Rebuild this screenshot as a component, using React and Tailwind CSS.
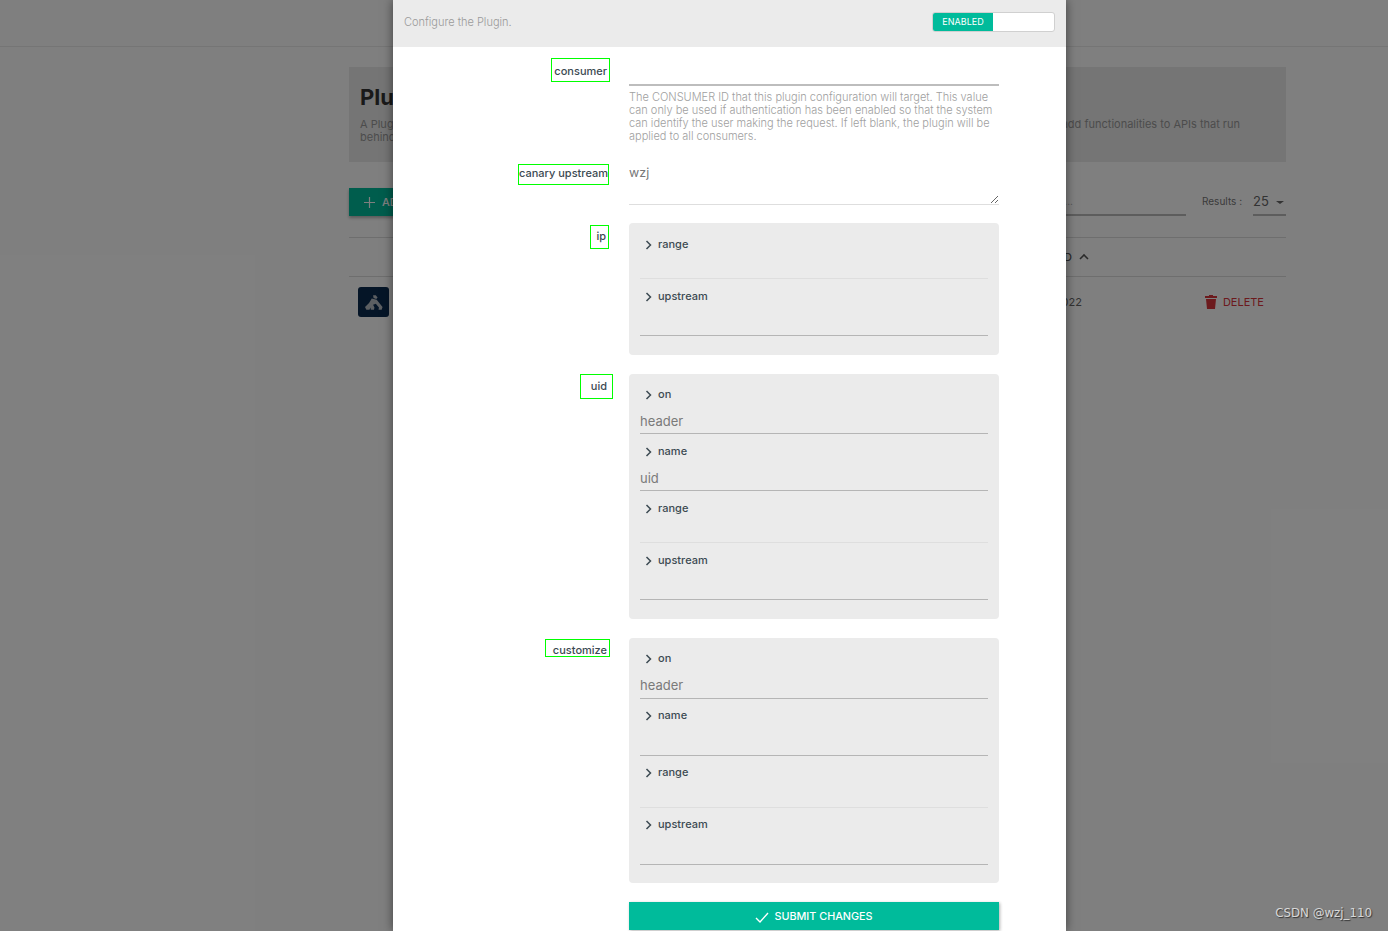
import React from "react";

function Title({ children }) {
  return (
    <div className="flex h-[21px] items-center pl-[5px] text-[11px] font-medium text-[#3c4a52]">
      <svg width="8" height="10" viewBox="0 0 8 10" className="mr-[5px]" fill="none" stroke="#3c4a52" strokeWidth="1.5">
        <path d="M1.5 1l4 4-4 4" />
      </svg>
      {children}
    </div>
  );
}

function InputField({ label, value = "", tall = false }) {
  return (
    <div className={tall ? "mb-[6px]" : "mb-[7px]"}>
      <Title>{label}</Title>
      <input
        readOnly
        value={value}
        className={
          (tall ? "h-[30px] pt-[2px] " : "h-[29px] pt-[3px] ") +
          "block w-full border-b border-[#b5b5b5] bg-transparent text-[13px] text-[#7a7a7a] outline-none"
        }
      />
    </div>
  );
}

function RangeField({ tall = false }) {
  return (
    <div className={tall ? "mb-[6px]" : "mb-[7px]"}>
      <Title>range</Title>
      <div className={(tall ? "h-[25px] " : "h-[24px] ") + "border-b border-[#dedede]"} />
    </div>
  );
}

function Panel({ children, className = "pt-[10px]" }) {
  return <div className={"rounded-[4px] bg-[#ebebeb] px-[11px] pb-[12px] " + className}>{children}</div>;
}

function Row({ label, children, className = "" }) {
  return (
    <div className={"flex " + className}>
      <div className="flex w-[216px] shrink-0 items-start justify-end">{label}</div>
      <div className="ml-[20px] w-[370px]">{children}</div>
    </div>
  );
}

function Label({ children, className = "" }) {
  return (
    <span className={"block border border-[#00ff00] text-right text-[11px] font-medium whitespace-nowrap text-[#3c4a52] " + className}>
      {children}
    </span>
  );
}

function KongLogo() {
  return (
    <svg width="18" height="17" viewBox="0 0 20 17" fill="#b9bec4">
      <path d="M9 0.5l3 0 2 2.5-1.5 1.5-3-1z" />
      <path d="M7.5 4l5.5 1.5 6.5 8-1 3h-3.5l.5-2.5-3.5-4-3 1 1.5 3-.5 2.500H6.500l-.5-2.500-1 2.500H1.500l-1.500-3 4.500-4.500z" />
    </svg>
  );
}

export default function App() {
  return (
    <div className="relative h-[931px] overflow-hidden bg-white font-['Inter',sans-serif]">
      {/* page behind the dialog */}
      <div className="h-[47px] border-b border-[#ebebeb]" />
      <div className="ml-[349px] w-[937px]">
        <div className="mt-[20px] h-[95px] bg-[#ebebeb] px-[11px] pt-[17px]">
          <div className="text-[22px] leading-[26px] font-bold text-[#333]">Plugins</div>
          <div className="mt-[8px] flex justify-between pr-[35px] text-[11px] leading-[13px] text-[#999]">
            <span>
              A Plugin entity represents a plugin
              <br />
              behind Kong
            </span>
            <span>add functionalities to APIs that run</span>
          </div>
        </div>
        <div className="mt-[26px] flex h-[28px] items-start justify-between">
          <div className="flex h-[28px] w-[120px] items-center bg-[#00bb9b] pl-[14px] text-[11px] font-medium whitespace-nowrap text-white shadow-[0_2px_3px_rgba(0,0,0,0.3)]">
            <svg width="13" height="13" viewBox="0 0 13 13" stroke="white" strokeWidth="1.2" className="mr-[6px] shrink-0">
              <path d="M6.500 1v11M1 6.500h11" />
            </svg>
            ADD NEW PLUGIN
          </div>
          <div className="flex items-start">
            <div className="mr-[16px] h-[28px] w-[200px] border-b-2 border-[#bbb] pt-[6px] pr-[113px] text-right text-[10px] text-[#aaa]">Search...</div>
            <div className="mt-[6px] w-[38px] text-[10px] whitespace-nowrap text-[#777]">Results :</div>
            <div className="ml-[13px] flex h-[28px] w-[33px] justify-between border-b-2 border-[#bbb] pt-[4px] pr-[2px] text-[13px] text-[#666]">
              25
              <span className="mt-[9px] h-0 w-0 border-x-[4px] border-t-[3px] border-x-transparent border-t-[#666]" />
            </div>
          </div>
        </div>
        <div className="mt-[21px] flex h-[40px] items-center justify-end border-y border-[#ddd] pr-[197px] text-[11px] font-medium text-[#555]">
          CREATED
          <svg width="10" height="8" viewBox="0 0 10 8" fill="none" stroke="#555" strokeWidth="1.6" className="ml-[7px]">
            <path d="M1 6l4-4 4 4" />
          </svg>
        </div>
        <div className="flex h-[50px] items-center justify-between pr-[22px] pl-[9px] text-[11px] text-[#666]">
          <div className="flex h-[30px] w-[31px] items-center justify-center rounded-[3px] bg-[#0a2a4f]">
            <KongLogo />
          </div>
          <div className="mr-[123px] ml-auto">Jan 12, 2022</div>
          <div className="flex items-center text-[11px] text-[#d9343a]">
            <svg width="12" height="14" viewBox="0 0 12 14" fill="#d9343a" className="mr-[6px]">
              <path d="M4 0h4v1h4v2H0V1h4zM1 4h10l-1 10H2z" />
            </svg>
            DELETE
          </div>
        </div>
      </div>

      {/* backdrop */}
      <div className="absolute inset-0 bg-black/50" />

      {/* dialog */}
      <div className="absolute top-0 bottom-0 left-[393px] w-[673px] bg-white shadow-[0_0_10px_rgba(0,0,0,0.5)]">
        <div className="flex h-[47px] items-start justify-between bg-[#ebebeb] px-[11px] pt-[12px]">
          <span className="mt-[2px] text-[11px] font-light text-[#9a9a9a]">Configure the Plugin.</span>
          <div className="h-[20px] w-[123px] rounded-[3px] border border-[#d0d0d0] bg-white">
            <div className="flex h-full w-[60px] items-center justify-center rounded-l-[2px] bg-[#00bb9b] text-[9px] text-white">ENABLED</div>
          </div>
        </div>

        <Row label={<Label className="mt-[11px] mr-[-1px] h-[24px] w-[59px] pt-[4px] pr-[2px]">consumer</Label>}>
          <div className="mt-[10px] h-[29px] border-b-2 border-[#bdbdbd]" />
          <p className="mt-[5px] text-[11px] leading-[13px] font-light text-[#a0a0a0]">
            The CONSUMER ID that this plugin configuration will target. This value can only be used if authentication has been enabled so that the system can identify the user making the request. If left blank, the plugin will be applied to all consumers.
          </p>
        </Row>

        <Row label={<Label className="mt-[4px] h-[21px] w-[91px] pr-[2px]">canary upstream</Label>} className="mt-[17px]">
          <textarea
            readOnly
            defaultValue="wzj"
            className="block h-[45px] w-full resize-y border-b border-[#dedede] pt-[4px] text-[12.5px] text-[#777] outline-none"
          />
        </Row>

        <Row label={<Label className="mt-[2px] h-[24px] w-[19px] pt-[2px] pr-[2px]">ip</Label>} className="mt-[18px]">
          <Panel className="pt-[11px]">
            <RangeField />
            <InputField label="upstream" />
          </Panel>
        </Row>

        <Row label={<Label className="mr-[-4px] h-[25px] w-[33px] pt-[3px] pr-[5px]">uid</Label>} className="mt-[19px]">
          <Panel>
            <InputField label="on" value="header" />
            <InputField label="name" value="uid" />
            <RangeField />
            <InputField label="upstream" />
          </Panel>
        </Row>

        <Row label={<Label className="mt-[1px] mr-[-1px] h-[18px] w-[65px] pt-[2px] pr-[2px]">customize</Label>} className="mt-[19px]">
          <Panel>
            <InputField label="on" value="header" tall />
            <InputField label="name" tall />
            <RangeField tall />
            <InputField label="upstream" tall />
          </Panel>
        </Row>

        <Row label={null} className="mt-[19px]">
          <div className="flex h-[28px] items-center justify-center bg-[#00bb9b] pt-[2px] text-[10.8px] font-medium text-white shadow-[1px_1px_3px_rgba(0,0,0,0.3)]">
            <svg width="14" height="11" viewBox="0 0 14 11" fill="none" stroke="white" strokeWidth="1.4" className="mr-[5px]">
              <path d="M1 6l4 4 8-9" />
            </svg>
            SUBMIT CHANGES
          </div>
        </Row>
      </div>

      {/* watermark */}
      <div className="absolute top-[905px] right-[16px] font-['DejaVu_Sans',sans-serif] text-[11.8px] leading-[16px] text-[#d8d8d8] [text-shadow:1px_1px_1px_#333]">
        CSDN @wzj_110
      </div>
    </div>
  );
}
